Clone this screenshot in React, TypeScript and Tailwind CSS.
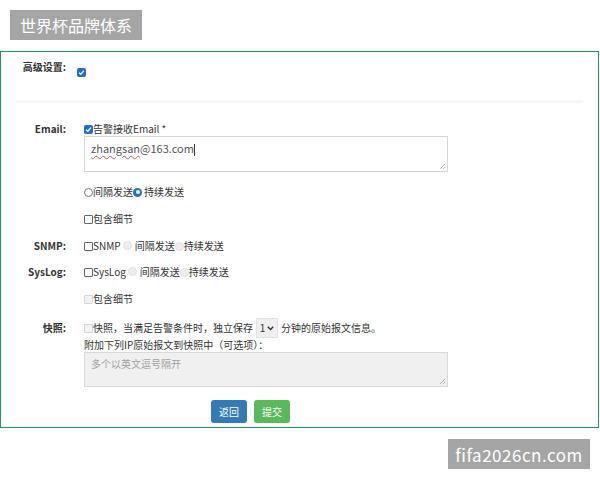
import React from "react";

const F = { fontFamily: '"Microsoft YaHei","Noto Sans CJK SC","Noto Sans",sans-serif' };

function Box({ checked = false, disabled = false }: { checked?: boolean; disabled?: boolean }) {
  if (checked)
    return (
      <span className="inline-flex w-[9px] h-[9px] rounded-[2px] bg-[#1f6fd1] items-center justify-center shrink-0">
        <svg width="7" height="7" viewBox="0 0 8 8">
          <path d="M1.2 4.2 L3.2 6 L6.8 1.8" stroke="white" strokeWidth="1.5" fill="none" />
        </svg>
      </span>
    );
  return (
    <span
      className={
        "inline-block w-[9px] h-[9px] rounded-[1px] border shrink-0 " +
        (disabled ? "border-[#d4d4d4] bg-[#f3f3f3]" : "border-[#666] bg-white")
      }
    />
  );
}

function Radio({ checked = false, disabled = false }: { checked?: boolean; disabled?: boolean }) {
  if (checked)
    return (
      <span className="inline-flex w-[9px] h-[9px] rounded-full bg-[#1f6fd1] items-center justify-center shrink-0">
        <span className="w-[4px] h-[4px] rounded-full bg-white" />
      </span>
    );
  return (
    <span
      className={
        "inline-block w-[9px] h-[9px] rounded-full border shrink-0 " +
        (disabled ? "border-[#e0e0e0] bg-[#eee]" : "border-[#777] bg-white")
      }
    />
  );
}

function Row({ label, className, children }: { label?: string; className: string; children?: React.ReactNode }) {
  return (
    <div className={"flex items-center " + className}>
      <div className="w-[65px] text-right font-bold text-[10px] text-[#333] leading-none">{label}</div>
      <div className="ml-[18px] flex items-center text-[10px] text-[#333] leading-none">{children}</div>
    </div>
  );
}

export default function App() {
  return (
    <div className="w-[600px] h-[480px] bg-white overflow-hidden" style={F}>
      <div className="pt-[10px] pl-[10px]">
        <div className="w-[132px] h-[30px] bg-[#a5a5a5] text-white text-[16px] flex items-center justify-center leading-none">
          世界杯品牌体系
        </div>
      </div>
      <div className="mt-[11px] w-[599px] border-[1.5px] border-[#1e9a5c] pb-[4px]">
        <div className="flex h-[30px]">
          <div className="w-[65px] text-right font-bold text-[10px] text-[#333] leading-none pt-[10px]">高级设置:</div>
          <div className="ml-[11px] pt-[5px]">
            <Box checked />
          </div>
        </div>
        <div className="mt-[18px] mx-[15px] h-[3px] bg-[#f6f6f6]" />

        <Row label="Email:" className="mt-[20px] h-[12px]">
          <Box checked />
          <span>告警接收Email *</span>
        </Row>
        <div className="mt-[1px] ml-[83px] w-[364px] h-[36px] border border-[#d6d6d6] bg-white relative px-[6px] pt-[4px] text-[11px] leading-[14px] text-[#555]">
          <span className="underline decoration-wavy decoration-[#e05050] decoration-[1px] underline-offset-2">zhangsan</span>
          @163.com
          <span className="inline-block w-[1px] h-[12px] bg-[#333] align-middle" />
          <svg className="absolute right-[2px] bottom-[2px]" width="6" height="6" viewBox="0 0 6 6">
            <path d="M6 1 L1 6 M6 4 L4 6" stroke="#aaa" strokeWidth="0.8" />
          </svg>
        </div>

        <Row className="mt-[14px] h-[12px]">
          <Radio />
          <span>间隔发送</span>
          <Radio checked />
          <span className="ml-[2px]">持续发送</span>
        </Row>
        <Row className="mt-[15px] h-[12px]">
          <Box />
          <span>包含细节</span>
        </Row>
        <Row label="SNMP:" className="mt-[15px] h-[12px]">
          <Box />
          <span>SNMP</span>
          <span className="ml-[2px]">
            <Radio disabled />
          </span>
          <span className="ml-[3px]">间隔发送</span>
          <Radio disabled />
          <span>持续发送</span>
        </Row>
        <Row label="SysLog:" className="mt-[14px] h-[12px]">
          <Box />
          <span>SysLog</span>
          <span className="ml-[2px]">
            <Radio disabled />
          </span>
          <span className="ml-[3px]">间隔发送</span>
          <Radio disabled />
          <span>持续发送</span>
        </Row>
        <Row className="mt-[15px] h-[12px]">
          <Box disabled />
          <span>包含细节</span>
        </Row>
        <Row label="快照:" className="mt-[13px] h-[20px]">
          <Box disabled />
          <span>快照，当满足告警条件时，独立保存</span>
          <span className="ml-[3px] w-[22px] h-[20px] bg-[#efefef] border border-[#e2e2e2] flex items-center justify-center gap-[2px] text-[10px]">
            1
            <svg width="7" height="5" viewBox="0 0 7 5">
              <path d="M0.8 0.8 L3.5 3.6 L6.2 0.8" stroke="#333" strokeWidth="1.4" fill="none" />
            </svg>
          </span>
          <span className="ml-[3px]">分钟的原始报文信息。</span>
        </Row>
        <div className="mt-[1px] ml-[83px] h-[12px] flex items-center text-[10px] text-[#333] leading-none">
          附加下列IP原始报文到快照中（可选项）：
        </div>
        <div className="mt-[1px] ml-[83px] w-[364px] h-[35px] border border-[#d9d9d9] bg-[#f0f0f0] relative px-[6px] pt-[6px] text-[10px] text-[#a0a0a0] leading-none">
          多个以英文逗号隔开
          <svg className="absolute right-[2px] bottom-[2px]" width="6" height="6" viewBox="0 0 6 6">
            <path d="M6 1 L1 6 M6 4 L4 6" stroke="#aaa" strokeWidth="0.8" />
          </svg>
        </div>
        <div className="mt-[13px] ml-[210px] flex gap-[7px]">
          <button className="w-[36px] h-[23px] rounded-[3px] bg-[#337ab7] text-white text-[10px] leading-none">返回</button>
          <button className="w-[36px] h-[23px] rounded-[3px] bg-[#5cb85c] text-white text-[10px] leading-none">提交</button>
        </div>
      </div>
      <div className="mt-[11px] flex justify-end pr-[10px]">
        <div className="w-[142px] h-[30px] bg-[#a5a5a5] text-white text-[17px] flex items-center justify-center leading-none tracking-[0.5px]">
          fifa2026cn.com
        </div>
      </div>
    </div>
  );
}
